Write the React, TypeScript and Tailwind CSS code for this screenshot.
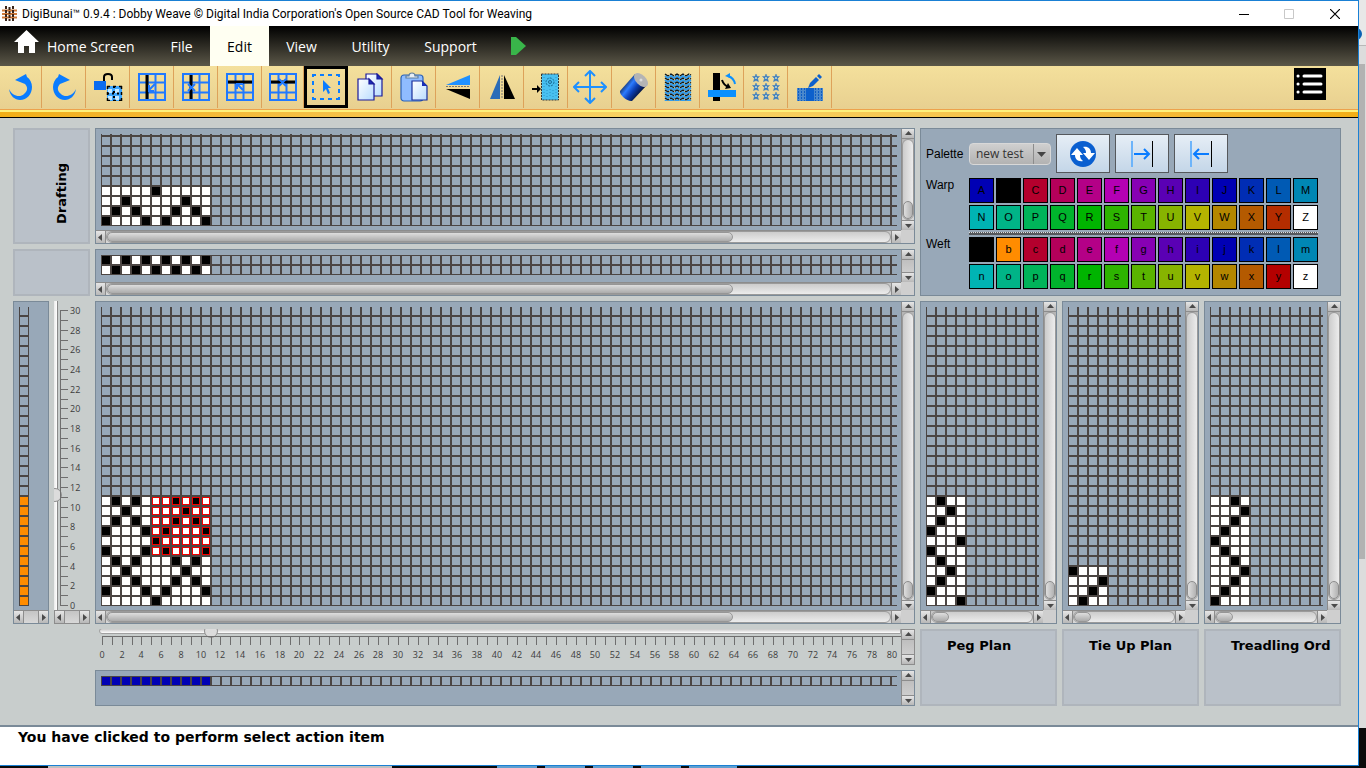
import { useState } from "react";
import type { ReactNode } from "react";

type Mark = { rows: string[]; fill?: string };

/* "#" is a raised thread, "." a lowered one */
const draftPlan = [".....#.....", "..#.....#..", ".#.#...#.#.", "#...#.#...#"];
const dentPlan = ["#.#.#.#.#.#", ".#.#.#.#.#."];
const weavePlan = [
  ".#.#...#.#.",
  "..#.....#..",
  ".#.#...#.#.",
  "#...#.#...#",
  ".....#.....",
  "#...#.#...#",
  ".#.#...#.#.",
  "..#.....#..",
  ".#.#...#.#.",
  "#...#.#...#",
  ".....#.....",
];
const pegPlan = [".#..", "..#.", ".#..", "#...", "...#", "#...", ".#..", "..#.", ".#..", "#...", "...#"];
const tiePlan = ["#...", "...#", "..#.", ".#.."];
const treadPlan = ["..#.", "...#", "..#.", ".#..", "#...", ".#..", "..#.", "...#", "..#.", ".#..", "#..."];

const warpColors = [
  ["A", "bg-[#0000b4]"], ["B", "bg-black"], ["C", "bg-[#b4002d]"], ["D", "bg-[#b4005a]"],
  ["E", "bg-[#b40087]"], ["F", "bg-[#b400b4]"], ["G", "bg-[#8700b4]"], ["H", "bg-[#5a00b4]"],
  ["I", "bg-[#2d00b4]"], ["J", "bg-[#0000b4]"], ["K", "bg-[#002db4]"], ["L", "bg-[#005ab4]"],
  ["M", "bg-[#0087b4]"], ["N", "bg-[#00b4b4]"], ["O", "bg-[#00b487]"], ["P", "bg-[#00b45a]"],
  ["Q", "bg-[#00b42d]"], ["R", "bg-[#00b400]"], ["S", "bg-[#2db400]"], ["T", "bg-[#5ab400]"],
  ["U", "bg-[#87b400]"], ["V", "bg-[#b4b400]"], ["W", "bg-[#b48700]"], ["X", "bg-[#b45a00]"],
  ["Y", "bg-[#b42d00]"], ["Z", "bg-white"],
];
const weftColors = warpColors.map(([key, bg]) => {
  if (key === "A") return ["a", "bg-black"];
  if (key === "B") return ["b", "bg-[#ff8c00]"];
  if (key === "Y") return ["y", "bg-[#b40000]"];
  return [key.toLowerCase(), bg];
});

function WeaveGrid({ id, total, rows = [], fill, selection }: Mark & { id: string; total: number; selection?: [number, number, number, number] }) {
  const height = total * 10;
  const top = height - rows.length * 10;
  return (
    <svg className="w-full shrink-0" height={height} shapeRendering="crispEdges" aria-hidden="true">
      <defs>
        <pattern id={id} width="10" height="10" patternUnits="userSpaceOnUse">
          <path d="M0 0h10v10h-10z M1 1v8h8v-8z" fill="#4b4543" />
        </pattern>
      </defs>
      {rows.map((row, y) =>
        row.split("").map((c, x) => (
          <rect key={`${x}-${y}`} x={x * 10 + 1} y={top + y * 10 + 1} width="8" height="8" fill={fill || (c === "#" ? "#000" : "#fff")} />
        ))
      )}
      <rect width="100%" height={height} fill={`url(#${id})`} />
      {selection &&
        rows.slice(selection[1], selection[3]).map((row, y) =>
          row.slice(selection[0], selection[2]).split("").map((c, x) => (
            <rect
              key={`s${x}-${y}`}
              x={(x + selection[0]) * 10 + 1.5}
              y={top + (y + selection[1]) * 10 + 1.5}
              width="7"
              height="7"
              fill="none"
              stroke="#f00000"
            />
          ))
        )}
    </svg>
  );
}

function Arrow({ d }: { d: string }) {
  return (
    <svg width="7" height="7" viewBox="0 0 7 7" fill="#4a4a4a" aria-hidden="true">
      <path d={d} />
    </svg>
  );
}

function HScroll({ thumb }: { thumb?: string }) {
  const btn = "flex w-[10px] shrink-0 items-center justify-center bg-linear-to-b from-[#e6e6e6] to-[#b8b8b8]";
  return (
    <div className="flex h-[13px] min-w-0 border-t border-[#8c8c8c] bg-linear-to-b from-[#c4c4c4] to-[#d8d8d8]">
      <button type="button" aria-label="Scroll left" className={`${btn} border-r border-[#8c8c8c]`}>
        <Arrow d="M5 0v7L1 3.500z" />
      </button>
      <div className={`min-w-0 flex-1 ${thumb ? "rounded-full border border-[#9a9a9a] bg-linear-to-b from-[#cccccc] to-[#ececec]" : ""}`}>
        {thumb && <div className={`h-full rounded-full border border-[#969696] bg-linear-to-b from-[#dedede] to-[#ababab] ${thumb}`} />}
      </div>
      <button type="button" aria-label="Scroll right" className={`${btn} border-l border-[#8c8c8c]`}>
        <Arrow d="M2 0v7L6 3.500z" />
      </button>
    </div>
  );
}

function VScroll({ thumb }: { thumb?: boolean }) {
  const btn = "flex h-[10px] shrink-0 items-center justify-center bg-linear-to-b from-[#e6e6e6] to-[#b8b8b8]";
  return (
    <div className="flex min-h-0 w-[13px] flex-col border-l border-[#8c8c8c] bg-linear-to-b from-[#b4b4b4] to-[#d8d8d8]">
      <button type="button" aria-label="Scroll up" className={`${btn} border-b border-[#8c8c8c]`}>
        <Arrow d="M0 5h7L3.500 1z" />
      </button>
      <div className={`flex min-h-0 flex-1 flex-col justify-end ${thumb ? "rounded-full border border-[#9a9a9a] bg-linear-to-r from-[#cccccc] to-[#ececec]" : ""}`}>
        {thumb && <div className="h-[18px] rounded-full border border-[#8c8c8c] bg-linear-to-r from-[#dedede] to-[#b2b2b2]" />}
      </div>
      <button type="button" aria-label="Scroll down" className={`${btn} border-t border-[#8c8c8c]`}>
        <Arrow d="M0 2h7L3.500 6z" />
      </button>
    </div>
  );
}

function GridPane({ children, view, thumb, short, className = "" }: { children: ReactNode; view: string; thumb: string; short?: boolean; className?: string }) {
  return (
    <section className={`grid min-w-0 grid-cols-[minmax(0,1fr)_13px] grid-rows-[minmax(0,1fr)_13px] border border-[#7a8a98] bg-[#98a8b8] ${className}`}>
      <div className="pt-[5px] pr-1 pb-1 pl-[5px]">
        <div className={`flex items-end overflow-hidden ${view}`}>{children}</div>
      </div>
      <VScroll thumb={!short} />
      <HScroll thumb={thumb} />
      <div className="bg-[#cfcfcf]" />
    </section>
  );
}

function Label({ children, className = "" }: { children?: ReactNode; className?: string }) {
  return (
    <div className={`overflow-hidden border-2 border-[#afb5bc] bg-[#bac1c9] font-['DejaVu_Sans',sans-serif] text-[13px] leading-5 font-bold whitespace-nowrap ${className}`}>
      {children}
    </div>
  );
}

function Swatches({ colors }: { colors: string[][] }) {
  return (
    <div className="grid grid-cols-[repeat(13,25px)] gap-[2px]">
      {colors.map(([key, bg]) => (
        <button key={key} type="button" className={`h-[25px] border border-black text-[11px] leading-none text-black ${bg}`}>
          {key}
        </button>
      ))}
    </div>
  );
}

function GridIcon({ children }: { children: ReactNode }) {
  return (
    <svg width="28" height="28" viewBox="0 0 28 28" fill="none" aria-hidden="true">
      <path d="M1 1h26v26h-26zM1 9.500h26M1 19.500h26M9.500 1v26M17.500 1v26" stroke="#2079ff" strokeWidth="2" />
      {children}
    </svg>
  );
}

const sheet = (
  <linearGradient id="sheet" x1="0" y1="0" x2="1" y2="1">
    <stop offset="0" stopColor="#ffffff" />
    <stop offset="1" stopColor="#b9dcff" />
  </linearGradient>
);

const stars = [5, 14, 23].flatMap((y) => [4, 14, 24].map((x) => [x, y]));

const tools: { name: string; icon: ReactNode }[] = [
  {
    name: "Undo",
    icon: (
      <svg width="28" height="28" viewBox="0 0 28 28" fill="#0a7cff">
        <path d="M8 7 19 1l1 3c3 2 5 6 5 10 0 7-5 13-12 13C8 27 3 23 2 16c3 7 11 9 15 5 4-3 4-7 1-10z" />
      </svg>
    ),
  },
  {
    name: "Redo",
    icon: (
      <svg width="28" height="28" viewBox="0 0 28 28" fill="#0a7cff">
        <path d="M20 7 9 1 8 4c-3 2-5 6-5 10 0 7 5 13 12 13 5 0 10-4 11-11-3 7-11 9-15 5-4-3-4-7-1-10z" />
      </svg>
    ),
  },
  {
    name: "Unlock repeat",
    icon: (
      <svg width="30" height="28" viewBox="0 0 30 28">
        <path d="M11 8V4q0-3 4-3t4 3v3" fill="none" stroke="#000" strokeWidth="2" />
        <path d="M1 8h12v9H1z" fill="#0a6cf0" />
        <path d="M14 13h15v15H14z" fill="#3fa8ff" />
        <path d="M15 16h4v4h-4zM22 16h4v4h-4zM15 23h4v4h-4zM22 23h4v4h-4z" fill="#c4e8ff" />
        <path d="M14 13.500h15M14 27.500h15M14.500 13v15M28.500 13v15" stroke="#000" strokeWidth="1.500" strokeDasharray="3 3" />
        <path d="M14 20.500h15M21 13v15" stroke="#000" strokeWidth="2" strokeDasharray="2 3" />
      </svg>
    ),
  },
  {
    name: "Insert warp",
    icon: (
      <GridIcon>
        <path d="M9 2v24" stroke="#000" strokeWidth="3" />
        <path d="M17 11l-6 6M11 12v6h5" stroke="#2079ff" strokeWidth="2" />
      </GridIcon>
    ),
  },
  {
    name: "Delete warp",
    icon: (
      <GridIcon>
        <path d="M9 2v24" stroke="#000" strokeWidth="3" />
        <path d="M6 11l7 7M13 11l-7 7" stroke="#2079ff" strokeWidth="2" />
      </GridIcon>
    ),
  },
  {
    name: "Insert weft",
    icon: (
      <GridIcon>
        <path d="M2 9h24" stroke="#000" strokeWidth="3" />
        <path d="M17 17l-6-6M11 16v-5h6" stroke="#2079ff" strokeWidth="2" />
      </GridIcon>
    ),
  },
  {
    name: "Delete weft",
    icon: (
      <GridIcon>
        <path d="M2 9h24" stroke="#000" strokeWidth="3" />
        <path d="M10 6l7 7M17 6l-7 7" stroke="#2079ff" strokeWidth="2" />
      </GridIcon>
    ),
  },
  {
    name: "Select",
    icon: (
      <svg width="28" height="28" viewBox="0 0 28 28">
        <path d="M1 4V2h3M8 2h4M16 2h4M24 2h3v2M27 8v4M27 16v4M27 24v2h-3M20 26h-4M12 26H8M4 26H1v-2M1 20v-4M1 12V8" fill="none" stroke="#0a7cff" strokeWidth="2" />
        <path d="M11 7v12l3-3 2 5 2-1-2-5h3z" fill="#0a7cff" />
      </svg>
    ),
  },
  {
    name: "Copy",
    icon: (
      <svg width="28" height="28" viewBox="0 0 28 28" stroke="#1a1a9a" strokeWidth="1.200">
        <defs>{sheet}</defs>
        <path d="M10 1h11l5 5v17H10z" fill="url(#sheet)" />
        <path d="M21 1v5h5z" fill="#1a2fb8" />
        <path d="M2 6h11l5 5v16H2z" fill="url(#sheet)" />
        <path d="M13 6v5h5z" fill="#1a2fb8" />
      </svg>
    ),
  },
  {
    name: "Paste",
    icon: (
      <svg width="28" height="30" viewBox="0 0 28 30" strokeWidth="1.200">
        <rect x="1" y="3" width="22" height="26" rx="3" fill="#8fbcff" stroke="#2a62b8" />
        <path d="M6 6V4h3q0-3 3-3t3 3h3v2z" fill="#e8eef5" stroke="#5f7f9f" />
        <path d="M12 9h10l5 5v14H12z" fill="url(#sheet)" stroke="#1a2f9a" />
        <path d="M22 9v5h5z" fill="#1a2fb8" />
      </svg>
    ),
  },
  {
    name: "Flip vertical",
    icon: (
      <svg width="28" height="28" viewBox="0 0 28 28">
        <path d="M2 12 26 2v10z" fill="#1e90ff" />
        <path d="M2 16 26 26V16z" fill="#000" />
        <path d="M2 13.500h24" stroke="#777" strokeDasharray="2 1" />
      </svg>
    ),
  },
  {
    name: "Flip horizontal",
    icon: (
      <svg width="28" height="28" viewBox="0 0 28 28">
        <path d="M2 26 12 2v24z" fill="#2a6cb8" />
        <path d="M27 26 16 2v24z" fill="#000" />
        <path d="M14 2v24" stroke="#777" strokeDasharray="2 1" />
      </svg>
    ),
  },
  {
    name: "Insert artwork",
    icon: (
      <svg width="28" height="28" viewBox="0 0 28 28">
        <path d="M9.500 1h17v26h-17z" fill="#48c0f0" stroke="#333" strokeDasharray="2 1" />
        <path d="M12 4v20M24 4v20M15 17v8M18 16v8M21 17v8" stroke="#2a96c8" strokeDasharray="1 2" />
        <circle cx="18" cy="9" r="4" fill="none" stroke="#1a6a94" strokeDasharray="2 1" />
        <circle cx="18" cy="9" r="1.500" fill="none" stroke="#1a6a94" />
        <path d="M0 15h5v-3l4 4-4 4v-3H0z" fill="#000" />
      </svg>
    ),
  },
  {
    name: "Move",
    icon: (
      <svg width="34" height="34" viewBox="0 0 34 34" fill="none" stroke="#1e90ff" strokeWidth="2">
        <path d="M17 2v30M2 17h30M12 6l5-5 5 5M12 28l5 5 5-5M6 12l-5 5 5 5M28 12l5 5-5 5" />
      </svg>
    ),
  },
  {
    name: "Yarn",
    icon: (
      <svg width="30" height="30" viewBox="0 0 30 30">
        <defs>
          <linearGradient id="spool" x1="0.150" y1="0.250" x2="0.800" y2="0.750">
            <stop offset="0" stopColor="#10152c" />
            <stop offset="0.350" stopColor="#2c7cff" />
            <stop offset="0.600" stopColor="#0c3fb4" />
            <stop offset="1" stopColor="#050a20" />
          </linearGradient>
        </defs>
        <path d="M1 19 16 2l12 11-15 16c-4 1-13-6-12-10z" fill="url(#spool)" />
        <ellipse cx="22" cy="8" rx="5" ry="8.500" transform="rotate(-45 22 8)" fill="#b4b4b4" />
        <circle cx="22" cy="8" r="1.500" fill="#dcdcdc" />
      </svg>
    ),
  },
  {
    name: "Fabric",
    icon: (
      <svg width="28" height="28" viewBox="0 0 28 28" fill="none">
        {[1, 5, 9, 13, 17, 21, 25].map((y) => (
          <g key={y}>
            <path d={`M1 ${y}l3 2 3-2 3 2 3-2 3 2 3-2 3 2 3-2 2 1`} stroke="#111" strokeWidth="1.400" strokeDasharray="5 1" />
            <path d={`M1 ${y + 2}l3 2 3-2 3 2 3-2 3 2 3-2 3 2 3-2 2 1`} stroke="#2f9cf0" strokeWidth="2" />
          </g>
        ))}
      </svg>
    ),
  },
  {
    name: "Swap warp and weft",
    icon: (
      <svg width="30" height="28" viewBox="0 0 30 28" fill="none">
        <path d="M6 0h7v28H6z" fill="#000" />
        <path d="M1 17h28v7H1z" fill="#0a90ff" />
        <path d="M15 7q2 6 7 7" stroke="#000" strokeWidth="2" />
        <path d="M21 10l3 5-6 1z" fill="#000" />
        <path d="M28 11q-1-6-7-8" stroke="#0a90ff" strokeWidth="2" />
        <path d="M18 3l5-3v5z" fill="#0a90ff" />
      </svg>
    ),
  },
  {
    name: "Repeat motif",
    icon: (
      <svg width="28" height="28" viewBox="0 0 28 28">
        {stars.map(([x, y]) => (
          <g key={`${x}-${y}`}>
            <path d={`M${x} ${y - 4}l1 2.500h2.500l-2 2 1 3-2.500-1-2.500 1 1-3-2-2h2.500z`} fill="#3a7cc0" stroke="#3a7cc0" strokeWidth="0.500" />
            <circle cx={x} cy={y} r="1" fill="#cfe0d0" />
          </g>
        ))}
      </svg>
    ),
  },
  {
    name: "Edit graph",
    icon: (
      <svg width="28" height="28" viewBox="0 0 28 28">
        <path d="M1 15h26v13H1z" fill="#4a88cc" />
        <path d="M2.500 15v13M5.500 15v13M8.500 15v13M19.500 15v13M22.500 15v13M25.500 15v13" stroke="#0c5cc4" strokeDasharray="2 1" />
        <path d="M10 15h8v13h-8z" fill="#0c60cc" />
        <path d="M12 15l2-5 6-6 3 3-6 6z" fill="#0c60cc" />
        <path d="M21 3l2-2 3 3-2 2z" fill="#0c60cc" />
      </svg>
    ),
  },
];

const menus = [
  { name: "File", width: "w-[57px]" },
  { name: "Edit", width: "w-[59px]" },
  { name: "View", width: "w-[65px]" },
  { name: "Utility", width: "w-[73px]" },
  { name: "Support", width: "w-[87px]" },
];

function TitleBar() {
  return (
    <header className="flex h-[25px] items-center bg-white pl-[2px]">
      <svg width="15" height="16" viewBox="0 0 15 16" fill="none" aria-hidden="true">
        <path d="M0 4.500h15M0 8h15M0 11.500h15" stroke="#d07a3a" strokeWidth="2" />
        <path d="M4 0v16M7.500 1v14M11 0v16" stroke="#3a2418" strokeWidth="2" strokeDasharray="3 1" />
      </svg>
      <h1 className="ml-[5px] flex-1 font-[Roboto,sans-serif] text-[12px] whitespace-nowrap">
        DigiBunai™ 0.9.4 : Dobby Weave © Digital India Corporation's Open Source CAD Tool for Weaving
      </h1>
      <button type="button" aria-label="Minimize" className="flex w-[45px] justify-center">
        <svg width="10" height="10"><path d="M0 5.500h10" stroke="#000" /></svg>
      </button>
      <button type="button" aria-label="Maximize" className="flex w-[45px] justify-center">
        <svg width="10" height="10" fill="none"><path d="M0.500 0.500h9v9h-9z" stroke="#c8c8c8" /></svg>
      </button>
      <button type="button" aria-label="Close" className="flex w-[47px] justify-center">
        <svg width="10" height="10"><path d="M0 0l10 10M10 0L0 10" stroke="#000" strokeWidth="1.200" /></svg>
      </button>
    </header>
  );
}

function MenuBar() {
  const [active, setActive] = useState("Edit");
  return (
    <nav className="flex h-10 bg-linear-to-b/srgb from-black to-[#5b5748] font-['Open_Sans',sans-serif] text-[14px] font-medium text-white">
      <button type="button" className="flex w-[153px] items-center gap-2 pl-[14px] whitespace-nowrap">
        <svg className="mb-2" width="25" height="24" viewBox="0 0 25 24" fill="#fff" aria-hidden="true">
          <path d="M12.500 0 25 12h-4v11h-6v-7h-5v7H4V12H0z" />
        </svg>
        <span>Home Screen</span>
      </button>
      {menus.map((m) => (
        <button
          key={m.name}
          type="button"
          onClick={() => setActive(m.name)}
          className={`${m.width} ${m.name === active ? "bg-[#fffff2] text-black" : ""}`}
        >
          {m.name}
        </button>
      ))}
      <button type="button" aria-label="Run" className="ml-4 flex items-center">
        <svg width="17" height="20" viewBox="0 0 17 20"><path d="M1 1h5l10 9-10 9H1z" fill="#39b54a" /></svg>
      </button>
    </nav>
  );
}

function ToolBar() {
  const [tool, setTool] = useState("Select");
  return (
    <div className="flex h-[43px] bg-linear-to-b from-[#f4e09c] to-[#e8d090]">
      {tools.map((t, i) => (
        <button
          key={t.name}
          type="button"
          aria-label={t.name}
          onClick={() => setTool(t.name)}
          className={`flex h-[42px] shrink-0 items-center justify-center ${i === 0 || i === 6 ? "w-[42px]" : "w-11"} ${
            t.name === tool ? "border-[3px] border-black" : "border-r border-[#dda25a]"
          }`}
        >
          {t.icon}
        </button>
      ))}
      <button type="button" aria-label="Menu" className="mt-[2px] mr-8 ml-auto h-8 w-8 bg-black">
        <svg width="32" height="32" viewBox="0 0 32 32" stroke="#fff" strokeWidth="3" strokeLinecap="round">
          <path d="M4 8h0.100M10 8h17M4 16h0.100M10 16h17M4 24h0.100M10 24h17" />
        </svg>
      </button>
    </div>
  );
}

function WeftRuler() {
  return (
    <div className="flex h-full w-9 flex-col overflow-x-clip">
      <div className="flex flex-1">
        <input
          type="range"
          aria-label="Weft count"
          min="0"
          max="30"
          defaultValue="11"
          className="-ml-[6px] h-[309px] w-[14px] shrink-0 appearance-none bg-transparent [direction:rtl] [writing-mode:vertical-lr] [&::-webkit-slider-runnable-track]:w-[6px] [&::-webkit-slider-runnable-track]:border-r [&::-webkit-slider-runnable-track]:border-[#8a8a8a] [&::-webkit-slider-runnable-track]:bg-linear-to-r [&::-webkit-slider-runnable-track]:from-[#dcdcdc] [&::-webkit-slider-runnable-track]:to-white [&::-webkit-slider-thumb]:-ml-1 [&::-webkit-slider-thumb]:size-[14px] [&::-webkit-slider-thumb]:appearance-none [&::-webkit-slider-thumb]:rounded-full [&::-webkit-slider-thumb]:border [&::-webkit-slider-thumb]:border-[#8f8f8f] [&::-webkit-slider-thumb]:bg-[#dcdcdc]"
        />
        <svg className="-ml-[2px] overflow-visible" width="30" height="309" fill="#3c3c3c" fontSize="9" fontFamily="'Open Sans', sans-serif" aria-hidden="true">
          <path d="M0.500 9v296" stroke="#6e6e6e" />
          {Array.from({ length: 31 }, (_, i) => {
            const y = Math.round(304 - i * 9.83);
            return (
              <g key={i}>
                <path d={`M0 ${y}.5h8`} stroke="#6e6e6e" />
                {i % 2 === 0 && <text x="10" y={y + 4}>{i}</text>}
              </g>
            );
          })}
        </svg>
      </div>
      <div className="border border-t-0 border-[#8c8c8c]">
        <HScroll />
      </div>
    </div>
  );
}

function WarpRuler() {
  return (
    <div className="flex h-9 min-w-0 overflow-hidden">
      <div className="min-w-0 flex-1 overflow-hidden pl-1">
        <input
          type="range"
          aria-label="Warp count"
          min="0"
          max="83"
          defaultValue="11"
          className="-mt-[5px] block h-[14px] w-full appearance-none bg-transparent [&::-webkit-slider-runnable-track]:h-[6px] [&::-webkit-slider-runnable-track]:rounded-l-full [&::-webkit-slider-runnable-track]:border [&::-webkit-slider-runnable-track]:border-[#a0a0a0] [&::-webkit-slider-runnable-track]:bg-linear-to-b [&::-webkit-slider-runnable-track]:from-[#c8c8c8] [&::-webkit-slider-runnable-track]:to-white [&::-webkit-slider-thumb]:-mt-[5px] [&::-webkit-slider-thumb]:size-[14px] [&::-webkit-slider-thumb]:appearance-none [&::-webkit-slider-thumb]:rounded-full [&::-webkit-slider-thumb]:border [&::-webkit-slider-thumb]:border-[#8f8f8f] [&::-webkit-slider-thumb]:bg-[#dcdcdc]"
        />
        <svg className="-mt-[2px] block" width="810" height="29" fill="#3c3c3c" fontSize="9" textAnchor="middle" fontFamily="'Open Sans', sans-serif" aria-hidden="true">
          <path d="M3 0.500h801" stroke="#6e6e6e" />
          {Array.from({ length: 82 }, (_, i) => {
            const x = Math.round(3 + i * 9.87);
            return (
              <g key={i}>
                <path d={`M${x}.5 0v9`} stroke="#6e6e6e" />
                {i % 2 === 0 && <text x={x} y="22">{i}</text>}
              </g>
            );
          })}
        </svg>
      </div>
      <div className="flex border border-l-0 border-[#8c8c8c]">
        <VScroll />
      </div>
    </div>
  );
}

function PalettePane() {
  const btn = "flex h-[39px] w-[54px] items-center justify-center border border-[#55585c] bg-linear-to-b from-[#e6eef6] to-[#c4d6e8]";
  return (
    <section className="col-span-3 row-span-2 flex flex-col border border-[#7a8a98] bg-[#98a8b8] pt-[5px] pl-[5px] text-[12px]">
      <div className="flex h-[39px] items-center">
        <label htmlFor="palette" className="w-[43px]">Palette</label>
        <select
          id="palette"
          defaultValue="new test"
          className="mr-[5px] h-[22px] w-[82px] appearance-none rounded-[4px] border border-[#d8d8d8] bg-linear-to-b from-[#cfcfcf] to-[#b2b2b2] bg-no-repeat pl-[6px] font-['Open_Sans',sans-serif] text-[12px] leading-none text-[#333]"
        >
          <option>new test</option>
        </select>
        <svg className="pointer-events-none -ml-[23px] mr-[5px]" width="18" height="20" aria-hidden="true">
          <path d="M0.500 0v20" stroke="#8c8c8c" />
          <path d="M4 8h9l-4.500 5z" fill="#444" />
        </svg>
        <div className="flex gap-[5px]">
          <button type="button" aria-label="Swap palettes" className={btn}>
            <svg width="26" height="26" viewBox="0 0 26 26">
              <circle cx="13" cy="13" r="13" fill="#0a5fd0" />
              <path d="M7 7l6 7h-3c0 3 1 4 3 6-5 1-8-2-8-6H1z" fill="#fff" />
              <path d="M19 19l-6-7h3c0-3-1-4-3-6 5-1 8 2 8 6h4z" fill="#fff" />
            </svg>
          </button>
          <button type="button" aria-label="Warp to weft" className={btn}>
            <svg width="24" height="28" viewBox="0 0 24 28" fill="none" strokeWidth="2">
              <path d="M2 1v26" stroke="#6db4fa" />
              <path d="M22.500 1v26" stroke="#000" strokeWidth="1" />
              <path d="M4 14h15M14 9l5 5-5 5" stroke="#0a7cff" />
            </svg>
          </button>
          <button type="button" aria-label="Weft to warp" className={btn}>
            <svg width="24" height="28" viewBox="0 0 24 28" fill="none" strokeWidth="2">
              <path d="M2 1v26" stroke="#6db4fa" />
              <path d="M22.500 1v26" stroke="#000" strokeWidth="1" />
              <path d="M5 14h15M10 9l-5 5 5 5" stroke="#0a7cff" />
            </svg>
          </button>
        </div>
      </div>
      <div className="mt-[5px] flex">
        <span className="w-[43px] shrink-0 leading-[14px]">Warp</span>
        <Swatches colors={warpColors} />
      </div>
      <div className="mt-[2px] ml-[43px] h-[3px] w-[349px] border-t border-dotted border-[#ddd] bg-[#55585c]" />
      <div className="mt-[2px] flex">
        <span className="w-[43px] shrink-0 leading-[14px]">Weft</span>
        <Swatches colors={weftColors} />
      </div>
    </section>
  );
}

function Workspace() {
  return (
    <main className="grid flex-1 grid-cols-[77px_minmax(0,1fr)_137px_137px_137px] grid-rows-[116px_47px_minmax(323px,1fr)_77px] gap-[5px] bg-[#c8cdcc] pt-[10px] pr-[17px] pb-[19px] pl-[13px]">
      <Label className="flex items-center justify-center pt-[14px] pl-5">
        <span className="rotate-180 [writing-mode:vertical-rl]">Drafting</span>
      </Label>
      <GridPane view="h-[92px]" thumb="w-[80%]">
        <WeaveGrid id="draft" total={10} rows={draftPlan} />
      </GridPane>
      <PalettePane />

      <Label />
      <GridPane view="h-[20px]" thumb="w-[80%]" short>
        <WeaveGrid id="dent" total={2} rows={dentPlan} />
      </GridPane>

      <div className="flex gap-[5px]">
        <section className="flex w-9 flex-col justify-between border border-[#7a8a98] bg-[#98a8b8]">
          <div className="mt-[5px] ml-[5px] flex h-[299px] w-[10px] items-end overflow-hidden">
            <WeaveGrid id="weft" total={30} rows={Array(11).fill(".")} fill="#ff8c00" />
          </div>
          <HScroll />
        </section>
        <WeftRuler />
      </div>
      <GridPane view="h-[299px]" thumb="w-[80%]">
        <WeaveGrid id="weave" total={30} rows={weavePlan} selection={[5, 0, 11, 6]} />
      </GridPane>
      <GridPane view="h-[299px]" thumb="w-[17px]">
        <WeaveGrid id="peg" total={30} rows={pegPlan} />
      </GridPane>
      <GridPane view="h-[299px]" thumb="w-[17px]">
        <WeaveGrid id="tie" total={30} rows={tiePlan} />
      </GridPane>
      <GridPane view="h-[299px]" thumb="w-[17px]">
        <WeaveGrid id="tread" total={30} rows={treadPlan} />
      </GridPane>

      <div className="col-start-2 flex min-w-0 flex-col gap-[5px]">
        <WarpRuler />
        <section className="flex h-9 border border-[#7a8a98] bg-[#98a8b8]">
          <div className="mt-[5px] mr-1 ml-[5px] h-[10px] min-w-0 flex-1 overflow-hidden">
            <WeaveGrid id="warp" total={1} rows={["..........."]} fill="#0000b4" />
          </div>
          <VScroll />
        </section>
      </div>
      <Label className="pt-[5px] pl-[25px]">Peg Plan</Label>
      <Label className="pt-[5px] pl-[25px]">Tie Up Plan</Label>
      <Label className="pt-[5px] pl-[25px]">Treadling Ord</Label>
    </main>
  );
}

export default function App() {
  return (
    <div className="flex min-h-screen flex-col bg-[#0b0b0b] font-['Liberation_Sans',Arial,sans-serif] text-black">
      <div className="flex flex-1">
        <div className="flex min-w-0 flex-1 flex-col border-t border-r border-b border-[#1a80d4]">
          <TitleBar />
          <MenuBar />
          <ToolBar />
          <div className="h-[9px] border-t border-b border-t-[#eda24c] border-b-black bg-[#fdf07c] pt-[2px]">
            <div className="h-[5px] bg-linear-to-r from-[#f2ae16] via-[#f8d466] to-[#f2ae16]" />
          </div>
          <Workspace />
          <footer className="h-10 border-t-2 border-[#7a8a98] bg-white pt-[2px] pl-[18px] font-['DejaVu_Sans',sans-serif] text-[14px] leading-4 font-bold">
            You have clicked to perform select action item
          </footer>
        </div>
        {/* strip of the window behind */}
        <div className="flex w-[7px] flex-col overflow-hidden">
          <div className="h-[46px] border-b border-[#b8b8b8] bg-[#e8e8e8] pt-7">
            <div className="-ml-[9px] size-3 rounded-full bg-[#0a62b4]" />
          </div>
          <div className="h-[18px] bg-[#dcdcdc]" />
          <div className="h-[495px] border-r border-[#dcdcdc] bg-[#b2b2b2]" />
          <div className="h-[169px] bg-[#dcdcdc]" />
        </div>
      </div>
      <div className="flex h-[2px]">
        <div className="ml-12 w-[344px] bg-[#c0c0c0]" />
        <div className="ml-[105px] flex gap-2">
          <div className="w-10 bg-[#5f9fd0]" />
          <div className="w-10 bg-[#5f9fd0]" />
          <div className="w-10 bg-[#5f9fd0]" />
          <div className="w-10 bg-[#5f9fd0]" />
          <div className="w-12 bg-[#5f9fd0]" />
        </div>
      </div>
    </div>
  );
}
